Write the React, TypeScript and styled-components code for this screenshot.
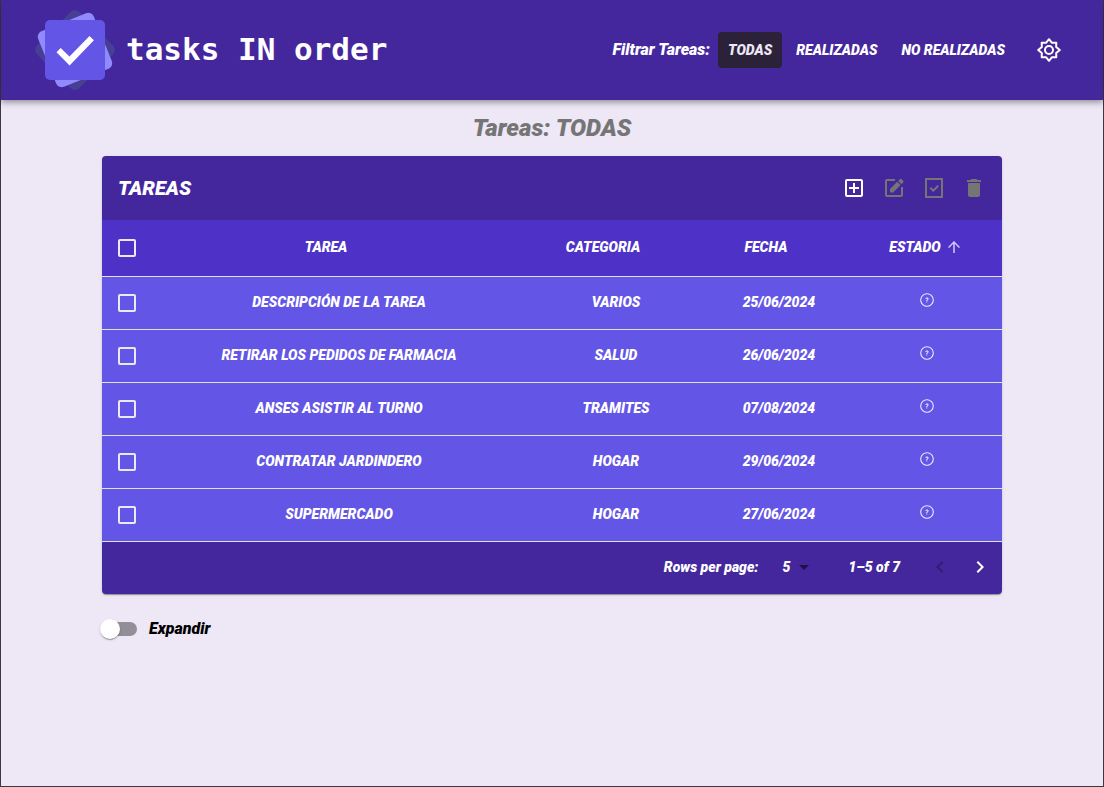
import React, { useState } from 'react';
import styled, { createGlobalStyle } from 'styled-components';
import {
  MdArrowDropDown,
  MdArrowUpward,
  MdDelete,
  MdKeyboardArrowLeft,
  MdKeyboardArrowRight,
  MdOutlineAddBox,
} from 'react-icons/md';
import { CiCircleQuestion } from 'react-icons/ci';

const color = {
  deep: '#45279d',
  head: '#4e32c8',
  row: '#6355e5',
  page: '#ede7f6',
  frame: '#3b393f',
  muted: '#757575',
};

const GlobalStyle = createGlobalStyle`
  *, *::before, *::after { box-sizing: border-box; }
  body {
    margin: 0;
    background: ${color.page};
    font-family: Roboto, sans-serif;
    font-style: italic;
    font-weight: 900;
    font-size: 14px;
    line-height: 20px;
  }
  button, select, input { font: inherit; color: inherit; margin: 0; }
`;

const Page = styled.div`
  min-height: 100vh;
  border: 1px solid ${color.frame};
  border-top: 0;
`;

const Header = styled.header`
  display: flex;
  align-items: center;
  justify-content: space-between;
  min-height: 100px;
  padding: 0 34px 0 32px;
  background: ${color.deep};
  color: #fff;
  box-shadow: 0 2px 4px -1px rgba(0, 0, 0, 0.2), 0 4px 5px rgba(0, 0, 0, 0.14),
    0 1px 10px rgba(0, 0, 0, 0.12);
`;

const Brand = styled.a`
  display: flex;
  align-items: center;
  gap: 8px;
  color: #fff;
  text-decoration: none;
`;

const BrandName = styled.span`
  padding: 0 0 2px 1px;
  font: normal 700 31px/40px 'DejaVu Sans Mono', monospace;
  white-space: nowrap;
`;

const Filters = styled.nav`
  display: flex;
  align-items: center;
  gap: 4px;
  white-space: nowrap;
`;

const FiltersLabel = styled.span`
  margin-right: 4px;
  font-size: 16px;
`;

const FilterButton = styled.button<{ $active: boolean }>`
  min-width: 64px;
  height: 36px;
  padding: 0 10px;
  border: 0;
  border-radius: 4px;
  background: ${(p) => (p.$active ? '#2b2239' : 'transparent')};
  color: ${(p) => (p.$active ? '#ede7f6' : '#fff')};
  cursor: pointer;
`;

const IconButton = styled.button`
  display: inline-flex;
  align-items: center;
  justify-content: center;
  width: 40px;
  height: 40px;
  padding: 0;
  border: 0;
  border-radius: 50%;
  background: none;
  color: #fff;
  font-size: 24px;
  cursor: pointer;

  &:disabled {
    color: ${color.muted};
    cursor: default;
  }
`;

const SettingsButton = styled(IconButton)`
  margin-left: 10px;
`;

const Main = styled.main`
  max-width: 900px;
  margin: 0 auto;
`;

const Title = styled.h1`
  margin: 0;
  padding: 12px 0;
  color: ${color.muted};
  font-size: 24px;
  font-weight: 900;
  line-height: 32px;
  text-align: center;
`;

const Card = styled.section`
  overflow: hidden;
  border-radius: 4px;
  background: ${color.deep};
  color: #fff;
  box-shadow: 0 2px 1px -1px rgba(0, 0, 0, 0.2), 0 1px 1px rgba(0, 0, 0, 0.14),
    0 1px 3px rgba(0, 0, 0, 0.12);
`;

const Toolbar = styled.div`
  display: flex;
  align-items: center;
  height: 64px;
  padding: 0 8px 0 16px;
`;

const ToolbarTitle = styled.h2`
  flex: 1;
  margin: 0;
  font-size: 20px;
  font-weight: 900;
  line-height: 32px;
`;

const Table = styled.table`
  width: 100%;
  border-collapse: separate;
  border-spacing: 0;
  table-layout: fixed;
  text-align: center;
`;

const HeadRow = styled.tr`
  height: 57px;
  background: ${color.head};
`;

const BodyRow = styled.tr`
  height: 53px;
  background: ${color.row};
`;

const HeadCell = styled.th<{ $width?: number }>`
  width: ${(p) => (p.$width ? `${p.$width}px` : 'auto')};
  padding: 0;
  border-bottom: 1px solid #e0e0e0;
  font-weight: inherit;
`;

const Cell = styled.td`
  padding: 0 0 2px;
  border-bottom: 1px solid #e0e0e0;
`;

const CheckCell = styled(Cell)`
  padding: 0 0 0 2px;
`;

const CheckHeadCell = styled(HeadCell)`
  padding: 0 0 0 2px;
`;

const SortButton = styled.button`
  display: inline-flex;
  align-items: center;
  gap: 4px;
  padding: 0 4px 2px 0;
  border: 0;
  background: none;
  cursor: pointer;
`;

const SortArrow = styled(MdArrowUpward)<{ $visible: boolean }>`
  font-size: 18px;
  opacity: ${(p) => (p.$visible ? 0.75 : 0)};
`;

const StatusIcon = styled(CiCircleQuestion)`
  display: block;
  margin: 0 auto;
  font-size: 16px;
  stroke: currentColor;
  stroke-width: 0.4px;
`;

const StatusCell = styled(Cell)`
  padding: 0 2px 6px 0;
`;

const Checkbox = styled.input`
  display: block;
  appearance: none;
  width: 18px;
  height: 18px;
  margin: 0 auto;
  border: 2px solid #ece8f8;
  border-radius: 2px;
  cursor: pointer;

  &:checked { background: #ece8f8; }
`;

const Pagination = styled.div`
  display: flex;
  align-items: center;
  justify-content: flex-end;
  height: 52px;
  padding: 0 2px 2px 0;
`;

const PageSize = styled.label`
  display: flex;
  align-items: center;
  gap: 24px;
  margin-right: 32px;
`;

const SelectWrap = styled.span`
  display: flex;
  align-items: center;
`;

const Select = styled.select`
  appearance: none;
  width: 10px;
  padding: 0;
  border: 0;
  background: none;
  text-overflow: clip;
  outline: 0;

  option { color: #000; }
`;

const SelectArrow = styled(MdArrowDropDown)`
  color: rgba(0, 0, 0, 0.54);
  font-size: 24px;
  pointer-events: none;
`;

const PageRange = styled.span`
  margin-right: 20px;
`;

const PageButton = styled(IconButton)`
  &:disabled { color: rgba(0, 0, 0, 0.26); }
`;

const SwitchRow = styled.label`
  display: inline-flex;
  align-items: center;
  gap: 12px;
  margin-top: 24px;
  color: #000;
  font-size: 16px;
  line-height: 22px;
  cursor: pointer;
`;

const Switch = styled.input`
  appearance: none;
  display: flex;
  align-items: center;
  width: 34px;
  height: 14px;
  margin-left: 1px;
  border-radius: 7px;
  background: #938f99;
  cursor: pointer;

  &::before {
    content: '';
    flex: none;
    width: 20px;
    height: 20px;
    margin-left: -3px;
    border-radius: 50%;
    background: #fff;
    box-shadow: 0 2px 1px -1px rgba(0, 0, 0, 0.2), 0 1px 1px rgba(0, 0, 0, 0.14),
      0 1px 3px rgba(0, 0, 0, 0.12);
  }

  &:checked { background: ${color.row}; }
  &:checked::before { margin-left: 17px; }
`;

const Logo = () => (
  <svg width="84" height="84" viewBox="-42 -42 84 84" aria-hidden="true">
    <rect x="-30" y="-30" width="60" height="60" rx="6" fill="#473f93" transform="rotate(45)" />
    <rect x="-30" y="-30" width="60" height="60" rx="6" fill="#918aff" transform="rotate(-22)" />
    <rect x="-30" y="-30" width="60" height="60" rx="5" fill="#6355e5" />
    <path d="M-18.500 2.300L-14.300-1.900L-5.500 6.600L14.500-14L18.900-9.800L-5.400 15.600Z" fill="#fff" />
  </svg>
);

const GearIcon = () => (
  <svg width="26" height="26" viewBox="0 0 26 26" fill="none" stroke="currentColor" strokeWidth="2" strokeLinejoin="round" aria-hidden="true">
    <path d="M13 2.200L16 5.800L20.300 5.700L20.200 10L23.800 13L20.200 16L20.300 20.300L16 20.200L13 23.800L10 20.200L5.700 20.300L5.800 16L2.200 13L5.800 10L5.700 5.700L10 5.800Z" />
    <circle cx="13" cy="13" r="4" />
  </svg>
);

const EditIcon = () => (
  <svg width="24" height="24" viewBox="0 0 24 24" aria-hidden="true">
    <path d="M13 4H5a1 1 0 0 0-1 1v14a1 1 0 0 0 1 1h14a1 1 0 0 0 1-1v-8" fill="none" stroke="currentColor" strokeWidth="2" />
    <path d="M8 13v3.500h3.200l7.300-7.400-3.300-3.300zM16.100 4.900l3.300 3.300 2-2a.8.800 0 0 0 0-1.100l-2.100-2.200a.8.800 0 0 0-1.100 0z" fill="currentColor" />
  </svg>
);

const DoneIcon = () => (
  <svg width="24" height="24" viewBox="0 0 24 24" fill="none" stroke="currentColor" strokeWidth="2" aria-hidden="true">
    <path d="M4 3h16v18H4zM8.300 11.700l3 2.900 4.900-4.900" />
  </svg>
);

const filters = ['TODAS', 'REALIZADAS', 'NO REALIZADAS'];

const columns: { name: string; width?: number }[] = [
  { name: 'TAREA' },
  { name: 'CATEGORIA', width: 176 },
  { name: 'FECHA', width: 150 },
  { name: 'ESTADO', width: 148 },
];

const tasks = [
  { name: 'DESCRIPCIÓN DE LA TAREA', category: 'VARIOS', date: '25/06/2024' },
  { name: 'RETIRAR LOS PEDIDOS DE FARMACIA', category: 'SALUD', date: '26/06/2024' },
  { name: 'ANSES ASISTIR AL TURNO', category: 'TRAMITES', date: '07/08/2024' },
  { name: 'CONTRATAR JARDINDERO', category: 'HOGAR', date: '29/06/2024' },
  { name: 'SUPERMERCADO', category: 'HOGAR', date: '27/06/2024' },
];

export default function App() {
  const [filter, setFilter] = useState('TODAS');

  return (
    <Page>
      <GlobalStyle />
      <Header>
        <Brand href="#">
          <Logo />
          <BrandName>tasks IN order</BrandName>
        </Brand>
        <Filters>
          <FiltersLabel>Filtrar Tareas:</FiltersLabel>
          {filters.map((name) => (
            <FilterButton key={name} $active={name === filter} onClick={() => setFilter(name)}>
              {name}
            </FilterButton>
          ))}
          <SettingsButton aria-label="Configuración">
            <GearIcon />
          </SettingsButton>
        </Filters>
      </Header>
      <Main>
        <Title>Tareas: {filter}</Title>
        <Card>
          <Toolbar>
            <ToolbarTitle>TAREAS</ToolbarTitle>
            <IconButton aria-label="Agregar"><MdOutlineAddBox /></IconButton>
            <IconButton aria-label="Editar" disabled><EditIcon /></IconButton>
            <IconButton aria-label="Completar" disabled><DoneIcon /></IconButton>
            <IconButton aria-label="Eliminar" disabled><MdDelete /></IconButton>
          </Toolbar>
          <Table>
            <thead>
              <HeadRow>
                <CheckHeadCell $width={48}>
                  <Checkbox type="checkbox" aria-label="Seleccionar todas" />
                </CheckHeadCell>
                {columns.map(({ name, width }) => (
                  <HeadCell key={name} $width={width} scope="col">
                    <SortButton>
                      {name}
                      <SortArrow $visible={name === 'ESTADO'} />
                    </SortButton>
                  </HeadCell>
                ))}
              </HeadRow>
            </thead>
            <tbody>
              {tasks.map((task) => (
                <BodyRow key={task.name}>
                  <CheckCell>
                    <Checkbox type="checkbox" aria-label={task.name} />
                  </CheckCell>
                  <Cell>{task.name}</Cell>
                  <Cell>{task.category}</Cell>
                  <Cell>{task.date}</Cell>
                  <StatusCell><StatusIcon /></StatusCell>
                </BodyRow>
              ))}
            </tbody>
          </Table>
          <Pagination>
            <PageSize>
              Rows per page:
              <SelectWrap>
                <Select defaultValue="5">
                  <option>5</option>
                  <option>10</option>
                  <option>25</option>
                </Select>
                <SelectArrow />
              </SelectWrap>
            </PageSize>
            <PageRange>1–5 of 7</PageRange>
            <PageButton aria-label="Página anterior" disabled><MdKeyboardArrowLeft /></PageButton>
            <PageButton aria-label="Página siguiente"><MdKeyboardArrowRight /></PageButton>
          </Pagination>
        </Card>
        <SwitchRow>
          <Switch type="checkbox" role="switch" />
          Expandir
        </SwitchRow>
      </Main>
    </Page>
  );
}
